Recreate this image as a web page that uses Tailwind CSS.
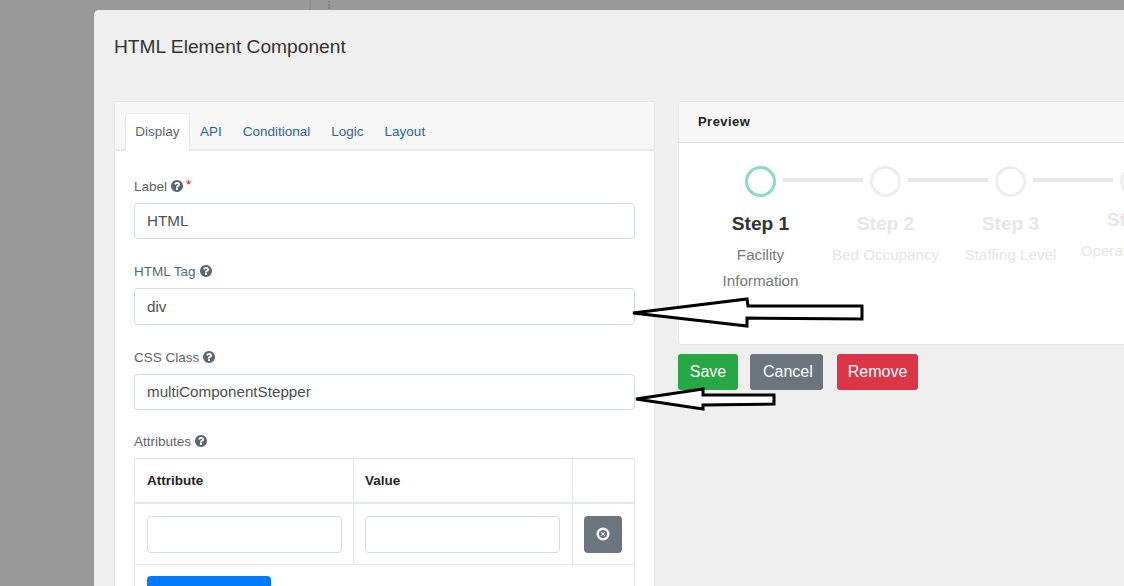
<!DOCTYPE html>
<html>
<head>
  <meta charset="UTF-8">
  <title>HTML Element Component</title>
  <script src="https://cdn.jsdelivr.net/npm/@tailwindcss/browser@4"></script>
</head>
<body class="relative h-[586px] w-[1124px] overflow-hidden bg-[#999999] font-['Liberation_Sans',Arial,sans-serif]">
  <svg class="hidden">
    <symbol id="help" viewBox="128 128 1536 1536"><path fill="currentColor" d="M1024 1376v-192q0-14-9-23t-23-9h-192q-14 0-23 9t-9 23v192q0 14 9 23t23 9h192q14 0 23-9t9-23zm256-672q0-88-55.5-163t-138.5-116-170-41q-243 0-371 213-15 24 8 42l132 100q7 6 19 6 16 0 25-12 53-68 86-92 34-24 86-24 48 0 85.5 26t37.5 59q0 38-20 61t-68 45q-63 28-115.5 86.5t-52.5 125.5v36q0 14 9 23t23 9h192q14 0 23-9t9-23q0-19 21.5-49.5t54.5-49.5q32-18 49-28.5t46-35 44.5-48 28-60.5 12.5-81zm384 192q0 209-103 385.5t-279.5 279.5-385.5 103-385.5-103-279.5-279.5-103-385.5 103-385.5 279.5-279.5 385.5-103 385.5 103 279.5 279.5 103 385.5z"/></symbol>
  </svg>

  <!-- page behind the overlay -->
  <div class="absolute left-[309px] top-0 h-[10px] w-[2px] bg-[#8f8f8f]"></div>
  <div class="absolute left-[328px] top-[1px] flex flex-col gap-[1px]">
    <div class="size-[2px] bg-[#808080]"></div>
    <div class="size-[2px] bg-[#808080]"></div>
    <div class="size-[2px] bg-[#808080]"></div>
  </div>

  <div class="ml-[94px] mt-[10px] h-[576px] w-[1200px] rounded-tl-[5px] bg-[#efefef] px-5 pt-[21px]">
    <h4 class="h-[70px] text-[19.2px] leading-[32px] text-[#333333]">HTML Element Component</h4>

    <div class="flex items-start gap-[23px]">
      <!-- settings -->
      <div class="h-[520px] w-[541px] shrink-0 rounded-[3px] border border-[#e6e6e6] bg-white">
        <div class="flex h-[49px] items-end border-b-2 border-[#e9e9e9] bg-[#f7f7f7] pl-[10px] text-[13.5px] text-[#2f6499]">
          <div class="-mb-[2px] flex h-[38px] w-[65px] items-center justify-center rounded-t-[3px] border border-b-0 border-[#e6e6e6] bg-white text-[#5c6670]">Display</div>
          <div class="flex h-[36px] items-center px-[10px] pt-[2px]">API</div>
          <div class="flex h-[36px] items-center px-[11px] pt-[2px]">Conditional</div>
          <div class="flex h-[36px] items-center pl-[10px] pr-[11px] pt-[2px]">Logic</div>
          <div class="flex h-[36px] items-center px-[10px] pt-[2px]">Layout</div>
        </div>

        <div class="px-[19px] pt-[26px] text-[13.5px] text-[#5c6670]">
          <div class="flex h-[18px] items-center gap-[4px] pt-[2px]">Label <svg class="-mt-[2px] size-[12px]"><use href="#help"/></svg> <span class="-mt-[4px] -ml-[1px] text-[#ff0000]">*</span></div>
          <div class="mt-[8px] flex h-[36px] w-[501px] items-center rounded-[4px] border border-[#d5dbe1] px-3 text-[15.2px] text-[#495057]">HTML</div>

          <div class="mt-[23px] flex h-[18px] items-center gap-[4px] pt-[2px]">HTML Tag <svg class="-mt-[2px] size-[12px]"><use href="#help"/></svg></div>
          <div class="mt-[8px] flex h-[37px] w-[501px] items-center rounded-[4px] border border-[#d5dbe1] px-3 pt-[2px] text-[15.2px] text-[#495057]">div</div>

          <div class="mt-[23px] flex h-[18px] items-center gap-[4px] pt-[2px]">CSS Class <svg class="-mt-[2px] size-[12px]"><use href="#help"/></svg></div>
          <div class="mt-[8px] flex h-[36px] w-[501px] items-center rounded-[4px] border border-[#d5dbe1] px-3 text-[15.2px] text-[#495057]">multiComponentStepper</div>

          <div class="mt-[22px] flex h-[18px] items-center gap-[4px] pt-[2px]">Attributes <svg class="-mt-[2px] size-[12px]"><use href="#help"/></svg></div>

          <div class="mt-[8px] w-[501px] border border-[#e4e8ec]">
            <div class="flex h-[45px] border-b-2 border-[#e4e8ec] text-[13.5px] font-bold text-[#212529]">
              <div class="flex w-[219px] items-center border-r border-[#e4e8ec] pl-3 pt-[2px]">Attribute</div>
              <div class="flex w-[219px] items-center border-r border-[#e4e8ec] pl-[11px] pt-[2px]">Value</div>
              <div class="flex-1"></div>
            </div>
            <div class="flex h-[61px] border-b border-[#e4e8ec]">
              <div class="flex w-[219px] items-center border-r border-[#e4e8ec] pl-3"><div class="h-[37px] w-[195px] rounded-[4px] border border-[#d5dbe1]"></div></div>
              <div class="flex w-[219px] items-center border-r border-[#e4e8ec] pl-[11px]"><div class="h-[37px] w-[195px] rounded-[4px] border border-[#d5dbe1]"></div></div>
              <div class="flex flex-1 items-center pl-[11px]">
                <div class="flex h-[37px] w-[38px] items-center justify-center rounded-[4px] bg-[#6c757d]">
                  <svg class="size-[14px]" viewBox="0 0 14 14" fill="none"><circle cx="7" cy="7" r="5.3" stroke="white" stroke-width="2.4"/><path d="M5.2 5.2l3.6 3.6M8.8 5.2l-3.6 3.6" stroke="white" stroke-width="1"/></svg>
                </div>
              </div>
            </div>
            <div class="h-[60px] pl-3 pt-[11px]"><div class="h-[37px] w-[124px] rounded-[4px] bg-[#007bff]"></div></div>
          </div>
        </div>
      </div>

      <!-- preview -->
      <div class="w-[560px] shrink-0">
        <div class="h-[244px] rounded-[3px] border border-[#e6e6e6] bg-white">
          <div class="flex h-[41px] items-center border-b border-[#e0e0e0] bg-[#f7f7f7] pl-[19px] text-[13px] font-bold tracking-[0.45px] text-[#222222]">Preview</div>
          <div class="flex pl-[19px] pt-[23px] text-center">
            <div class="w-[125px] shrink-0">
              <div class="relative mx-auto size-[31px] rounded-full border-[3px] border-[#8adbc0]"></div>
              <div class="mt-[14px] text-[19.2px] font-bold leading-[26px] text-[#333333]">Step 1</div>
              <div class="mt-[5px] text-[15.2px] leading-[26px] text-[#777777]">Facility<br>Information</div>
            </div>
            <div class="relative w-[125px] shrink-0">
              <div class="absolute -left-[40px] top-[12px] h-[4px] w-[80px] bg-[#e6e6e6]"></div>
              <div class="mx-auto size-[31px] rounded-full border-[3px] border-[#eeeeee]"></div>
              <div class="mt-[14px] text-[19.2px] font-bold leading-[26px] text-[#e6e6e6]">Step 2</div>
              <div class="mt-[5px] text-[15.2px] leading-[26px] text-[#e6e6e6]">Bed Occupancy</div>
            </div>
            <div class="relative w-[125px] shrink-0">
              <div class="absolute -left-[40px] top-[12px] h-[4px] w-[80px] bg-[#e6e6e6]"></div>
              <div class="mx-auto size-[31px] rounded-full border-[3px] border-[#eeeeee]"></div>
              <div class="mt-[14px] text-[19.2px] font-bold leading-[26px] text-[#e6e6e6]">Step 3</div>
              <div class="mt-[5px] text-[15.2px] leading-[26px] text-[#e6e6e6]">Staffing Level</div>
            </div>
            <div class="relative w-[125px] shrink-0">
              <div class="absolute -left-[40px] top-[12px] h-[4px] w-[80px] bg-[#e6e6e6]"></div>
              <div class="mx-auto size-[31px] rounded-full border-[3px] border-[#eeeeee]"></div>
              <div class="mt-[10px] text-[19.2px] font-bold leading-[26px] text-[#e6e6e6]">Step 4</div>
              <div class="mt-[5px] text-[15.2px] leading-[26px] text-[#e6e6e6]">Operating Costs</div>
            </div>
          </div>
        </div>

        <div class="mt-[9px] flex text-[16px] leading-[36px] text-white">
          <div class="h-[36px] w-[60px] rounded-[3px] bg-[#28a745] text-center">Save</div>
          <div class="ml-[12px] h-[36px] w-[73px] rounded-[3px] bg-[#6c757d] pl-[13px]">Cancel</div>
          <div class="ml-[14px] h-[36px] w-[81px] rounded-[3px] bg-[#dc3545] text-center">Remove</div>
        </div>
      </div>
    </div>
  </div>

  <!-- hand drawn arrows on top of the screenshot -->
  <svg class="absolute left-0 top-0" width="1124" height="586" fill="white" stroke="black" stroke-width="3">
    <polygon points="633,313 747,299 748,306 862,306 862,319 747,318 747,326"/>
    <polygon points="636,399 703,389 703,395 774,395 774,404 703,405 703,409"/>
  </svg>
</body>
</html>
